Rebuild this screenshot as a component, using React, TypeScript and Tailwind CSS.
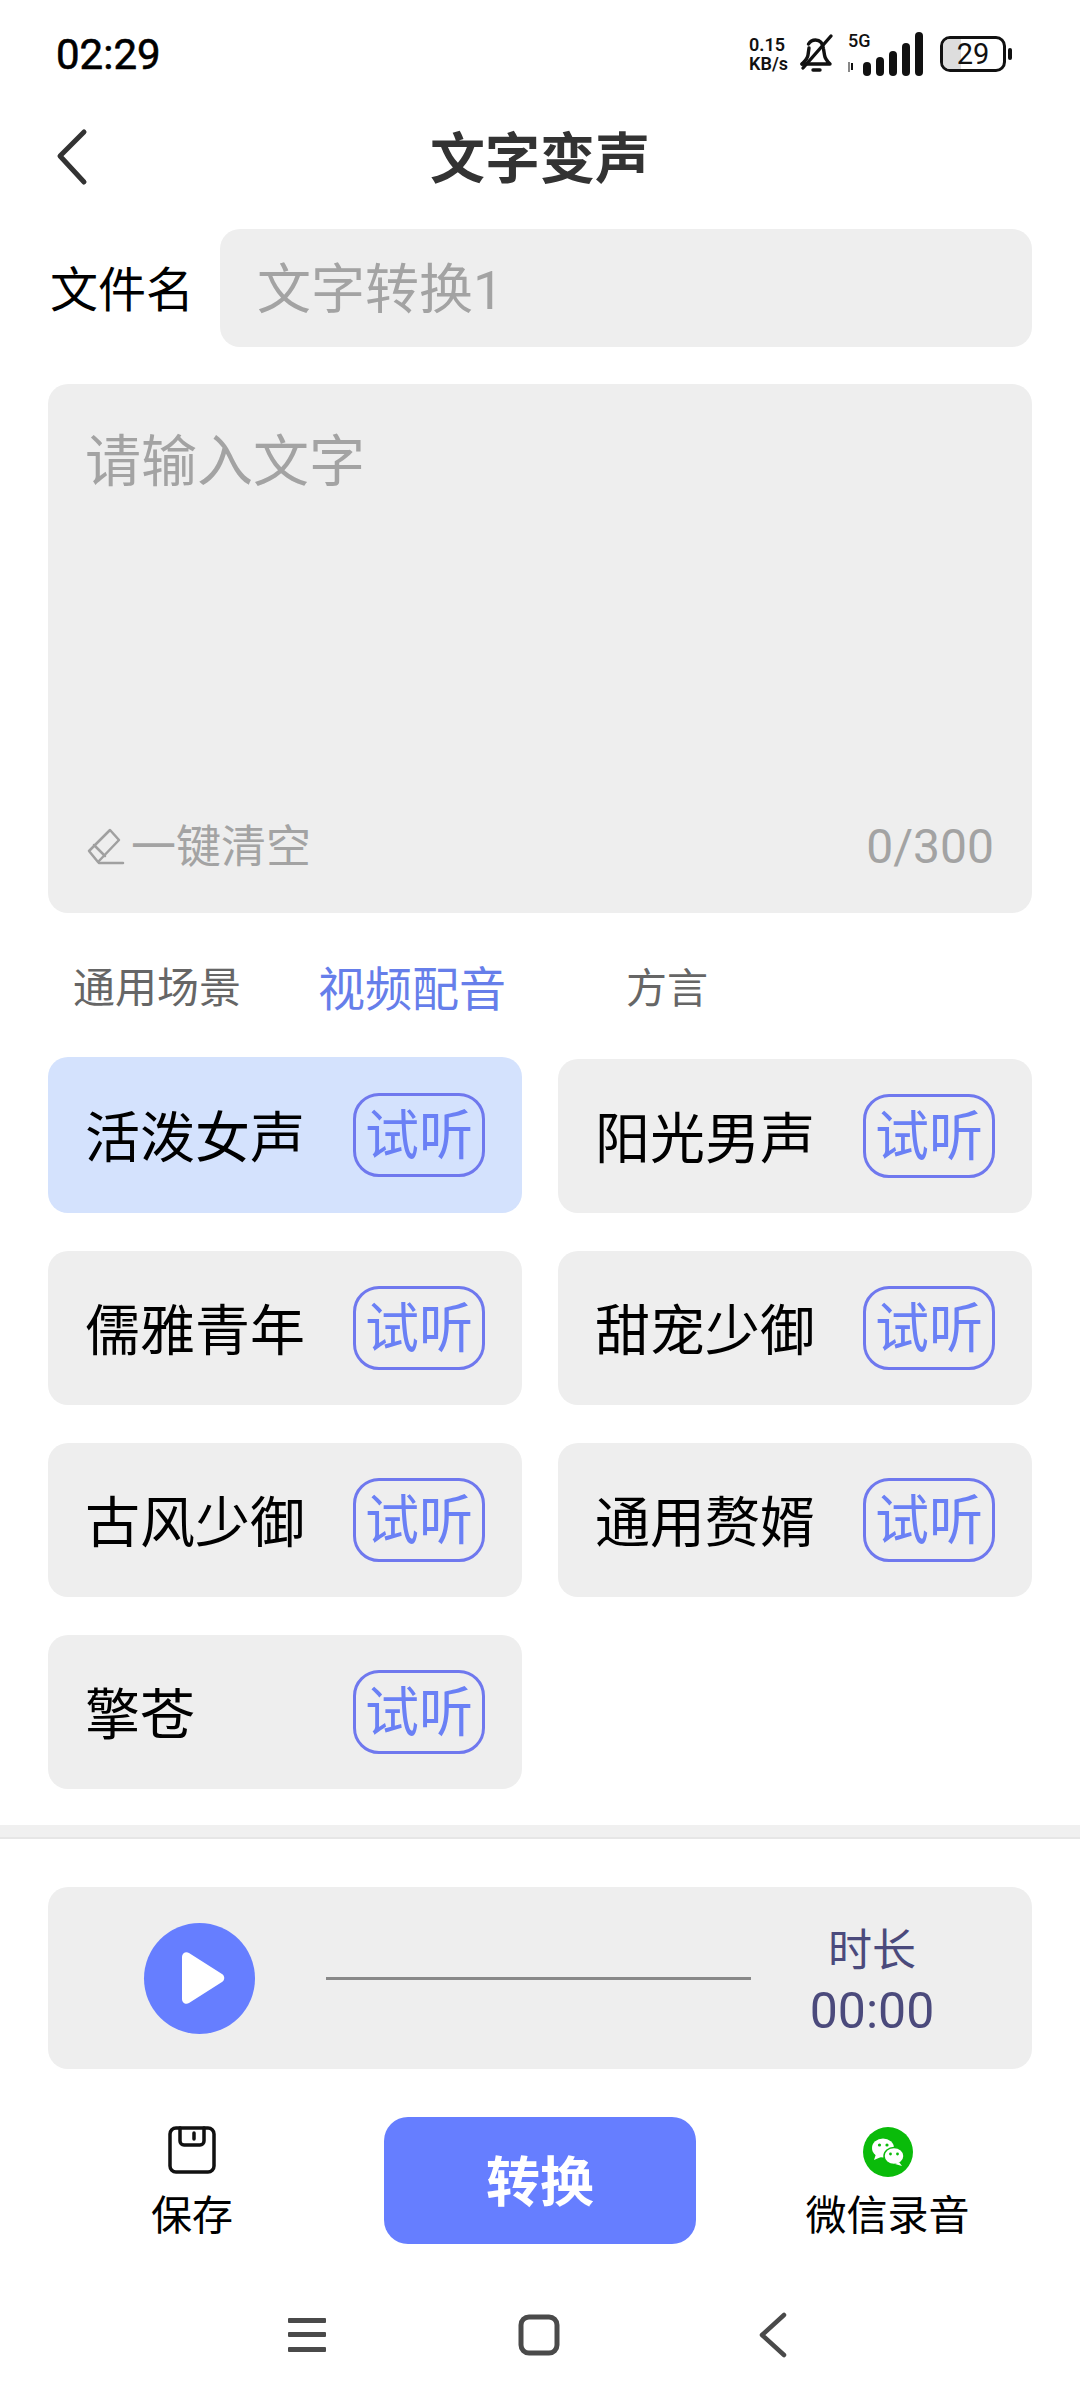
import React from 'react';

const FONT = "font-['Roboto','Noto_Sans_CJK_SC',sans-serif]";

const voices = [
  { name: '活泼女声', active: true },
  { name: '阳光男声' },
  { name: '儒雅青年' },
  { name: '甜宠少御' },
  { name: '古风少御' },
  { name: '通用赘婿' },
  { name: '擎苍' },
];

const StatusBar = () => (
  <div className="h-[110px] shrink-0 pl-[56px] pr-[68px] pt-[32px] flex justify-between items-start">
    <span className="text-[42px] leading-[46px] text-black [-webkit-text-stroke:0.6px_black]">02:29</span>
    <div className="flex items-center mt-[-2px]">
      <div className="flex flex-col text-[18px] leading-[19px] font-semibold text-[#111] mr-[10px]">
        <span>0.15</span>
        <span>KB/s</span>
      </div>
      <svg width="38" height="42" viewBox="0 0 38 42" fill="none" stroke="#111" strokeWidth="3.4" strokeLinecap="round" strokeLinejoin="round">
        <path d="M4 31h28c-3-3-5-5-5.500-9l-1-6c-.7-6-4-9-8-9-3 0-5.500 1.500-7 4" />
        <path d="M11 15l-1 7c-.5 4-3 6-6 9" />
        <path d="M33 3L5 35" />
        <path d="M15 37h7" />
      </svg>
      <div className="relative w-[78px] h-[48px] ml-[10px]">
        <span className="absolute left-[2px] top-[1px] text-[18px] leading-[20px] font-medium text-[#111]">5G</span>
        <svg className="absolute left-0 top-0" width="78" height="48" viewBox="0 0 78 48" fill="#111">
          <rect x="2" y="32" width="2" height="10" fill="#888" />
          <rect x="5" y="33" width="2" height="7" />
          <rect x="17" y="32" width="8" height="14" rx="4" />
          <rect x="30" y="27" width="8" height="19" rx="4" />
          <rect x="43" y="21" width="8" height="25" rx="4" />
          <rect x="56" y="13" width="8" height="33" rx="4" />
          <rect x="69" y="2" width="8" height="44" rx="4" />
        </svg>
      </div>
      <div className="ml-[16px] w-[66px] h-[36px] border-[3px] border-[#111] rounded-[10px] overflow-hidden relative flex items-center justify-center">
        <div className="absolute left-0 top-0 bottom-0 w-[18px] bg-[#ddd]" />
        <span className="relative text-[29px] leading-none text-[#111]">29</span>
      </div>
      <div className="w-[4px] h-[12px] bg-[#111] rounded-[2px] ml-[2px]" />
    </div>
  </div>
);

const Header = () => (
  <div className="relative h-[92px] shrink-0 flex items-center justify-center">
    <svg className="absolute left-[55px] top-[18px]" width="34" height="58" viewBox="0 0 34 58" fill="none" stroke="#333" strokeWidth="5" strokeLinecap="round" strokeLinejoin="round">
      <path d="M29 4L5 28l24 26" />
    </svg>
    <span className="text-[55px] leading-none font-bold text-[#333] pt-[6px]">文字变声</span>
  </div>
);

const VoiceCard = ({ name, active }: { name: string; active?: boolean }) => (
  <div className={`rounded-[20px] pl-[37px] pr-[37px] flex items-center justify-between ${active ? 'h-[156px] -mt-[2px] bg-[#d4e2fd]' : 'h-[154px] bg-[#eeeeee]'}`}>
    <span className="text-[55px] leading-none text-black pt-[6px]">{name}</span>
    <span className="w-[132px] h-[84px] rounded-[26px] border-[3px] border-[#6f78ee] flex items-center justify-center text-[#6a80f5] text-[54px] leading-none pt-[4px]">
      试听
    </span>
  </div>
);

const PlayerCard = () => (
  <div className="mx-[48px] mt-[48px] h-[182px] rounded-[20px] bg-[#eeeeee] flex items-center pl-[96px]">
    <div className="w-[111px] h-[111px] rounded-full bg-[#667eff] flex items-center justify-center shrink-0">
      <svg width="48" height="54" viewBox="0 0 48 54" fill="#fff" className="ml-[6px]">
        <path d="M3 6c0-4 4-6 7-4l33 21c3 2 3 6 0 8L10 52c-3 2-7 0-7-4z" />
      </svg>
    </div>
    <div className="w-[425px] h-[3px] bg-[#888888] ml-[71px]" />
    <div className="flex flex-col items-center w-[122px] ml-[60px] text-[#4b4a7c] text-[44px] leading-[60px] pt-[5px]">
      <span>时长</span>
      <span className="font-['Roboto'] text-[50px]">00:00</span>
    </div>
  </div>
);

const BottomActions = () => (
  <div className="relative mt-[48px] h-[127px] flex justify-center">
    <div className="absolute left-[151px] top-[8px] w-[82px] flex flex-col items-center">
      <svg width="50" height="50" viewBox="0 0 50 50" fill="none" stroke="#111" strokeWidth="3.500" strokeLinejoin="round" strokeLinecap="round">
        <rect x="3" y="3" width="44" height="44" rx="6" />
        <path d="M13 3v13a4 4 0 0 0 4 4h16a4 4 0 0 0 4-4V3" />
        <path d="M27 8v6" />
      </svg>
      <span className="text-[41px] leading-[50px] text-black mt-[16px]">保存</span>
    </div>
    <div className="w-[312px] h-[127px] rounded-[24px] bg-[#667eff] flex items-center justify-center text-white text-[54px] font-bold leading-none pt-[6px]">
      转换
    </div>
    <div className="absolute left-[805px] top-[10px] w-[165px] flex flex-col items-center">
      <svg width="50" height="50" viewBox="0 0 50 50">
        <circle cx="25" cy="25" r="25" fill="#0abb0a" />
        <ellipse cx="20" cy="21" rx="11" ry="9.500" fill="#fff" />
        <path d="M13 27l-2 6 7-3z" fill="#fff" />
        <ellipse cx="31" cy="29" rx="10" ry="8.500" fill="#fff" stroke="#0abb0a" strokeWidth="1.500" />
        <path d="M36 35l3 4-7-2z" fill="#fff" />
        <circle cx="16.500" cy="18" r="1.600" fill="#0abb0a" />
        <circle cx="24" cy="18" r="1.600" fill="#0abb0a" />
        <circle cx="27.500" cy="27" r="1.400" fill="#0abb0a" />
        <circle cx="34.500" cy="27" r="1.400" fill="#0abb0a" />
      </svg>
      <span className="text-[41px] leading-[50px] text-black mt-[14px] whitespace-nowrap">微信录音</span>
    </div>
  </div>
);

const NavBar = () => (
  <div className="relative flex-1">
    <svg className="absolute left-[286px] top-[72px]" width="42" height="38" viewBox="0 0 42 38" fill="#4a4a4a">
      <rect x="2" y="2" width="38" height="5" rx="1" />
      <rect x="2" y="16" width="38" height="5" rx="1" />
      <rect x="2" y="31" width="38" height="5" rx="1" />
    </svg>
    <svg className="absolute left-[518px] top-[70px]" width="42" height="42" viewBox="0 0 42 42" fill="none" stroke="#4a4a4a" strokeWidth="5">
      <rect x="3" y="3" width="36" height="36" rx="8" />
    </svg>
    <svg className="absolute left-[757px] top-[68px]" width="32" height="46" viewBox="0 0 32 46" fill="none" stroke="#4a4a4a" strokeWidth="4.500" strokeLinecap="round" strokeLinejoin="round">
      <path d="M27 3L5 23l22 20" />
    </svg>
  </div>
);

export default function App() {
  return (
    <div className={`w-[1080px] h-[2400px] bg-white flex flex-col overflow-hidden ${FONT}`}>
      <StatusBar />
      <Header />

      {/* File name */}
      <div className="mt-[27px] pl-[50px] pr-[48px] flex items-center h-[118px] shrink-0">
        <span className="w-[170px] text-[48px] leading-none text-black pt-[6px]">文件名</span>
        <div className="flex-1 h-full rounded-[20px] bg-[#eeeeee] pl-[37px] pt-[6px] flex items-center text-[54px] leading-none text-[#a3a3a3]">
          文字转换1
        </div>
      </div>

      {/* Text input */}
      <div className="mt-[37px] mx-[48px] h-[529px] shrink-0 rounded-[20px] bg-[#eeeeee] px-[38px] pt-[50px] pb-[42px] flex flex-col justify-between">
        <span className="text-[56px] leading-none text-[#a3a3a3] -ml-[1px]">请输入文字</span>
        <div className="flex items-center justify-between">
          <div className="flex items-center text-[45px] leading-none text-[#a3a3a3]">
            <svg width="40" height="40" viewBox="0 0 40 40" fill="none" stroke="#a0a0a0" strokeWidth="2.500" strokeLinejoin="round" strokeLinecap="round" className="mr-[5px]">
              <path d="M24 3L3 24l9 11 21-22z" />
              <path d="M8 18l11 11" />
              <path d="M13 36h24" />
            </svg>
            一键清空
          </div>
          <span className="font-['Roboto'] text-[48px] leading-none text-[#a3a3a3]">0/300</span>
        </div>
      </div>

      {/* Tabs */}
      <div className="h-[146px] shrink-0 flex items-center pt-[6px]">
        <span className="ml-[73px] w-[245px] text-[42px] leading-none text-[#666666]">通用场景</span>
        <span className="w-[308px] text-[47px] leading-none text-[#667eea]">视频配音</span>
        <span className="text-[41px] leading-none text-[#666666]">方言</span>
      </div>

      {/* Voices */}
      <div className="mx-[48px] grid grid-cols-2 gap-x-[36px] gap-y-[38px] shrink-0">
        {voices.map(v => (
          <VoiceCard key={v.name} name={v.name} active={v.active} />
        ))}
      </div>

      <div className="mt-[36px] h-[14px] shrink-0 bg-[#f0f0f0] border-b-[2px] border-[#e6e6e6]" />
      <PlayerCard />
      <BottomActions />
      <NavBar />
    </div>
  );
}
